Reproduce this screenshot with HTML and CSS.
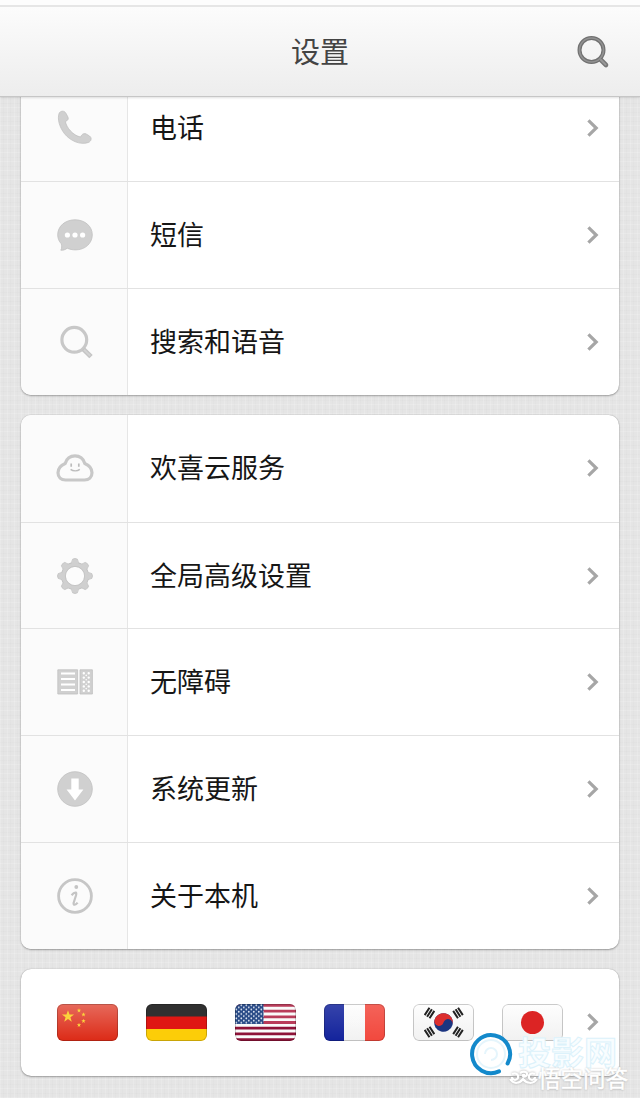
FILE: index.html
```html
<!DOCTYPE html>
<html lang="zh-CN">
<head>
    <meta charset="UTF-8">
    <meta name="viewport" content="width=device-width, initial-scale=1.0">
    <title>设置</title>
    <link rel="stylesheet" href="styles.css">
</head>
<body>
    <!-- shared shapes -->
    <svg class="defs" width="0" height="0">
        <defs>
            <linearGradient id="gloss" x1="0" y1="0" x2="0" y2="1">
                <stop offset="0" stop-color="#fff" stop-opacity="0.3"/>
                <stop offset="1" stop-color="#fff" stop-opacity="0"/>
            </linearGradient>
            <linearGradient id="paper" x1="0" y1="0" x2="0" y2="1">
                <stop offset="0" stop-color="#fefefe"/>
                <stop offset="1" stop-color="#f1f1f1"/>
            </linearGradient>
            <pattern id="stars" width="5" height="4.4" patternUnits="userSpaceOnUse">
                <circle cx="1.3" cy="1.2" r="0.9" fill="#dfe6f2"/>
                <circle cx="3.8" cy="3.4" r="0.9" fill="#dfe6f2"/>
            </pattern>
            <symbol id="chevron" viewBox="0 0 14 18">
                <path d="M2.4 1.4 L10.2 9 L2.4 16.6" fill="none" stroke="#a6a6a6" stroke-width="3.2"/>
            </symbol>
            <path id="star" d="M0 -6 L1.5 -1.8 L5.8 -1.8 L2.3 0.8 L3.6 5 L0 2.4 L-3.6 5 L-2.3 0.8 L-5.8 -1.8 L-1.5 -1.8 Z"/>
            <path id="bars" d="M-4.4 -2.9 H4.4 M-4.4 0 H4.4 M-4.4 2.9 H4.4"/>
            <path id="tooth" d="M12.5 7.4 Q16.4 6.4 16.6 2.2 Q19 0.8 21.4 2.2 Q21.6 6.4 25.5 7.4 Z"/>
        </defs>
    </svg>

    <header class="header">
        <h1>设置</h1>
        <svg class="header-search" width="34" height="34" viewBox="0 0 34 34">
            <path d="M25 25 L30 30" stroke="#777" stroke-width="4.6" stroke-linecap="round"/>
            <circle cx="15.5" cy="15" r="12" fill="none" stroke="#717171" stroke-width="4"/>
            <circle cx="15.5" cy="15" r="12" fill="none" stroke="#929292" stroke-width="1.6"/>
            <path d="M25 25 L29.6 29.6" stroke="#999" stroke-width="2" stroke-linecap="round"/>
        </svg>
    </header>

    <main class="content">
        <section class="card card-first">
            <div class="row">
                <div class="icon">
                    <svg width="38" height="38" viewBox="0 0 38 38">
                        <path class="solid" d="M3.3 3.8 C5.5 1.4 8.6 1.7 10 4.4 L12 8.2 C12.8 10.2 11.7 11.5 9.4 12.6 C10.4 18.6 17.2 26.6 24.5 28 C25.6 25.6 27.4 24.2 29.7 24.7 L33.5 27 C36.2 29.2 35.3 32 32.6 33.4 C24 36.5 14 31.5 8.6 24.8 C3.8 18.7 0.8 10 3.3 3.8 Z"/>
                    </svg>
                </div>
                <div class="label">电话</div>
                <svg class="arrow" width="14" height="18"><use href="#chevron"/></svg>
            </div>
            <div class="row">
                <div class="icon">
                    <svg width="38" height="38" viewBox="0 0 38 38">
                        <path class="solid" d="M19 3.8 C29 3.8 36.3 10.4 36.3 18.8 C36.3 27.5 29 33.9 19.5 33.9 C16.4 33.9 13.6 33.2 11.2 32.2 C9.4 33.7 7.2 34.4 4.8 34.2 C6 32 5.8 30 5.3 27.8 C3 25.4 1.7 22.4 1.7 18.8 C1.7 10.4 9 3.8 19 3.8 Z"/>
                        <circle class="hole" cx="11.4" cy="19" r="2.6"/>
                        <circle class="hole" cx="19" cy="19" r="2.6"/>
                        <circle class="hole" cx="26.6" cy="19" r="2.6"/>
                    </svg>
                </div>
                <div class="label">短信</div>
                <svg class="arrow" width="14" height="18"><use href="#chevron"/></svg>
            </div>
            <div class="row">
                <div class="icon">
                    <svg width="38" height="38" viewBox="0 0 38 38">
                        <circle class="line" cx="18.3" cy="16.8" r="12.4"/>
                        <path d="M27.3 26.1 L35 33.6" stroke="#c4c4c4" stroke-width="4.8"/>
                        <path d="M28 26.8 L34.2 32.8" stroke="#d3d3d3" stroke-width="2"/>
                    </svg>
                </div>
                <div class="label">搜索和语音</div>
                <svg class="arrow" width="14" height="18"><use href="#chevron"/></svg>
            </div>
        </section>

        <section class="card">
            <div class="row">
                <div class="icon">
                    <svg width="38" height="38" viewBox="0 0 38 38">
                        <path class="line" d="M9.5 31 H28.5 C32.9 31 36 28.2 36 23.8 C36 19.4 33.2 16.2 28.8 14.4 C27.2 9.4 23.8 6.9 19 6.9 C14.2 6.9 10.8 9.4 9.2 14.4 C4.8 16.2 2 19.4 2 23.8 C2 28.2 5.1 31 9.5 31 Z"/>
                        <path d="M15.2 14.6 V17.8 M22.8 14.6 V17.8" stroke="#bcbcbc" stroke-width="1.7"/>
                        <path d="M14.6 20.4 C17 22.4 21.4 22.4 23.8 20.4" fill="none" stroke="#bcbcbc" stroke-width="1.4"/>
                    </svg>
                </div>
                <div class="label">欢喜云服务</div>
                <svg class="arrow" width="14" height="18"><use href="#chevron"/></svg>
            </div>
            <div class="row">
                <div class="icon">
                    <svg width="38" height="38" viewBox="0 0 38 38">
                        <g class="solid">
                            <use href="#tooth"/>
                            <use href="#tooth" transform="rotate(45 19 19)"/>
                            <use href="#tooth" transform="rotate(90 19 19)"/>
                            <use href="#tooth" transform="rotate(135 19 19)"/>
                            <use href="#tooth" transform="rotate(180 19 19)"/>
                            <use href="#tooth" transform="rotate(225 19 19)"/>
                            <use href="#tooth" transform="rotate(270 19 19)"/>
                            <use href="#tooth" transform="rotate(315 19 19)"/>
                        </g>
                        <circle cx="19" cy="19" r="11.2" fill="#fcfcfc" stroke="#d0d0d0" stroke-width="3.8"/>
                        <circle cx="19" cy="19" r="9.6" fill="none" stroke="#c0c0c0" stroke-width="0.8"/>
                    </svg>
                </div>
                <div class="label">全局高级设置</div>
                <svg class="arrow" width="14" height="18"><use href="#chevron"/></svg>
            </div>
            <div class="row">
                <div class="icon">
                    <svg width="38" height="38" viewBox="0 0 38 38">
                        <path class="solid" d="M1.8 6.8 H21.6 V31 H1.8 Z M24 6.8 H36.4 V31 H24 Z"/>
                        <path d="M5 10.5 H19 M5 16 H19 M5 21.5 H19 M5 27 H19" stroke="#fff" stroke-width="2.2"/>
                        <path d="M27.8 10.2 V30 M32.7 10.2 V30" stroke="#fff" stroke-width="2.4" stroke-linecap="round" stroke-dasharray="0 4.4"/>
                        <path d="M30.2 12.4 V28" stroke="#fff" stroke-width="1.6" stroke-linecap="round" stroke-dasharray="0 4.4"/>
                    </svg>
                </div>
                <div class="label">无障碍</div>
                <svg class="arrow" width="14" height="18"><use href="#chevron"/></svg>
            </div>
            <div class="row">
                <div class="icon">
                    <svg width="38" height="38" viewBox="0 0 38 38">
                        <circle class="solid" cx="19" cy="19" r="17.3"/>
                        <path class="hole" d="M15.3 8.4 H22.7 V19.4 H27.4 L19 30.4 L10.6 19.4 H15.3 Z"/>
                    </svg>
                </div>
                <div class="label">系统更新</div>
                <svg class="arrow" width="14" height="18"><use href="#chevron"/></svg>
            </div>
            <div class="row">
                <div class="icon">
                    <svg width="38" height="38" viewBox="0 0 38 38">
                        <circle cx="19" cy="19" r="16.4" fill="none" stroke="#c6c6c6" stroke-width="2.8"/>
                        <circle cx="20.3" cy="10" r="1.9" fill="#c4c4c4"/>
                        <path d="M15.6 18.2 C17 16.4 18.4 15.4 19.8 15.6 C20.8 16 20.2 17.6 19.8 19 L17.6 26 C17.2 28.6 19.6 28.2 21.6 25.6" fill="none" stroke="#c4c4c4" stroke-width="2.2"/>
                    </svg>
                </div>
                <div class="label">关于本机</div>
                <svg class="arrow" width="14" height="18"><use href="#chevron"/></svg>
            </div>
        </section>

        <section class="card">
            <div class="row flags">
                <div class="flag">
                    <svg width="61" height="37" viewBox="0 0 61 37">
                        <rect width="61" height="37" fill="#dc2a16"/>
                        <rect width="61" height="37" fill="url(#gloss)"/>
                        <g fill="#fbd33c">
                            <use href="#star" transform="translate(11 12.5) scale(1.05)"/>
                            <use href="#star" transform="translate(22 6.5) scale(.38)"/>
                            <use href="#star" transform="translate(26.5 10.5) scale(.38)"/>
                            <use href="#star" transform="translate(26.5 17) scale(.38)"/>
                            <use href="#star" transform="translate(22 21) scale(.38)"/>
                        </g>
                    </svg>
                </div>
                <div class="flag">
                    <svg width="61" height="37" viewBox="0 0 61 37">
                        <rect width="61" height="13" fill="#303030"/>
                        <rect y="12.5" width="61" height="12.5" fill="#df1713"/>
                        <rect y="25" width="61" height="12" fill="#fccd08"/>
                    </svg>
                </div>
                <div class="flag">
                    <svg width="61" height="37" viewBox="0 0 61 37">
                        <rect width="61" height="37" fill="#fafafa"/>
                        <path d="M0 1.4 H61 M0 7.1 H61 M0 12.8 H61 M0 18.5 H61" stroke="#b93c5a" stroke-width="2.8"/>
                        <path d="M0 24.2 H61 M0 29.9 H61 M0 35.6 H61" stroke="#8e1238" stroke-width="2.8"/>
                        <rect width="28.5" height="20" fill="#284a86"/>
                        <rect width="28.5" height="20" fill="url(#stars)"/>
                    </svg>
                </div>
                <div class="flag">
                    <svg width="61" height="37" viewBox="0 0 61 37">
                        <rect width="20.5" height="37" fill="#13239c"/>
                        <rect x="20" width="21" height="37" fill="url(#paper)"/>
                        <rect x="41" width="20" height="37" fill="#f2483d"/>
                        <rect width="61" height="37" fill="url(#gloss)" opacity=".5"/>
                    </svg>
                </div>
                <div class="flag">
                    <svg width="61" height="37" viewBox="0 0 61 37">
                        <rect width="61" height="37" fill="url(#paper)"/>
                        <g transform="rotate(15 30.5 18.5)">
                            <circle cx="30.5" cy="18.5" r="9.3" fill="#1b3580"/>
                            <path d="M21.2 18.5 A9.3 9.3 0 0 1 39.8 18.5 A4.65 4.65 0 0 0 30.5 18.5 A4.65 4.65 0 0 1 21.2 18.5 Z" fill="#dc2e2e"/>
                        </g>
                        <g stroke="#222" stroke-width="2">
                            <use href="#bars" transform="translate(16.5 9) rotate(-57)"/>
                            <use href="#bars" transform="translate(45 9) rotate(57)"/>
                            <use href="#bars" transform="translate(16.5 28) rotate(57)"/>
                            <use href="#bars" transform="translate(45 28) rotate(-57)"/>
                        </g>
                    </svg>
                </div>
                <div class="flag">
                    <svg width="61" height="37" viewBox="0 0 61 37">
                        <rect width="61" height="37" fill="url(#paper)"/>
                        <circle cx="30.5" cy="18.5" r="11.5" fill="#dc2424"/>
                    </svg>
                </div>
                <svg class="arrow" width="14" height="18"><use href="#chevron"/></svg>
            </div>
        </section>
    </main>

    <div class="brand-mark">
        <svg width="44" height="44" viewBox="0 0 44 44">
            <circle cx="22" cy="22" r="14" fill="none" stroke="#e5f5fc" stroke-width="2"/>
            <path d="M16 22 A6 6 0 1 1 22 28" fill="none" stroke="#e5f5fc" stroke-width="2"/>
            <path d="M30 39.4 A19 19 0 1 1 38.6 31.5" fill="none" stroke="#1389cb" stroke-width="4" stroke-linecap="round"/>
        </svg>
        <span>投影网</span>
    </div>
    <div class="source-mark">
        <svg width="29" height="18" viewBox="0 0 29 18">
            <path d="M3 6 C7 4 10 7 9 10 C7 13 3 12 3 9 M11 5 C16 2 20 5 17 8 C14 10 12 6 16 7 M26 6 C22 4 19 7 20 10 C22 13 26 12 26 9 M1 11 C5 17 11 15 14 11 C17 15 24 17 28 11"/>
        </svg>
        <span>悟空问答</span>
    </div>
</body>
</html>
```

FILE: styles.css
```css
* {
    box-sizing: border-box;
}
body {
    margin: 0;
    height: 1098px;
    position: relative;
    overflow: hidden;
    font-family: "Noto Sans CJK SC", sans-serif;
    color: #161616;
    background-color: #e5e5e5;
    /* woven texture */
    background-image:
        repeating-linear-gradient(90deg, rgba(255, 255, 255, 0.16) 0 1px, transparent 1px 3px, rgba(0, 0, 0, 0.01) 3px 4px, transparent 4px 7px),
        repeating-linear-gradient(0deg, rgba(255, 255, 255, 0.16) 0 1px, transparent 1px 4px, rgba(0, 0, 0, 0.01) 4px 5px, transparent 5px 9px);
}
svg {
    display: block;
}
.defs {
    position: absolute;
}
.header {
    position: relative;
    z-index: 1;
    height: 97px;
    border-top: 5px solid #fdfdfd;
    border-bottom: 1px solid #c6c6c6;
    background: linear-gradient(#e6e6e6 0, #e6e6e6 2px, #fcfcfc 2px, #ededed 100%);
    box-shadow: 0 1px 2px rgba(0, 0, 0, 0.12);
    display: flex;
    align-items: center;
    justify-content: center;
}
h1 {
    margin: 0;
    padding-bottom: 2px;
    font-size: 29px;
    font-weight: 400;
    line-height: 40px;
    color: #444;
}
.header-search {
    position: absolute;
    right: 30px;
    top: 30px;
}
.content {
    display: flex;
    flex-direction: column;
    gap: 20.5px;
    padding: 0 21px;
}
.card {
    background: #fff;
    border-radius: 10px;
    overflow: hidden;
    box-shadow: 0 1px 2px rgba(0, 0, 0, 0.3), 0 0 1px rgba(0, 0, 0, 0.35);
}
/* scrolled partly under the header */
.card-first {
    margin-top: -22.5px;
}
.row {
    height: 106.7px;
    display: flex;
    align-items: center;
    padding-right: 19px;
}
.row + .row {
    border-top: 1px solid #e2e2e2;
}
.icon {
    width: 107px;
    height: 100%;
    padding-left: 1px;
    background: #fbfbfb;
    border-right: 1px solid #e6e6e6;
    display: flex;
    align-items: center;
    justify-content: center;
}
.icon svg {
    position: relative;
    left: 0.5px;
}
.label {
    flex: 1;
    padding: 0 0 2px 22px;
    font-size: 27px;
    line-height: 40px;
}
.arrow {
    flex: none;
    margin-left: auto;
}
.solid {
    fill: #d0d0d0;
    stroke: #c0c0c0;
    stroke-width: 0.8;
}
.line {
    fill: none;
    stroke: #c8c8c8;
    stroke-width: 3.2;
}
.hole {
    fill: #fff;
}
.flags {
    padding-left: 36px;
    gap: 28px;
}
.flag {
    position: relative;
    flex: none;
    width: 61px;
    height: 37px;
    border-radius: 6px;
    overflow: hidden;
}
.flag::after {
    content: "";
    position: absolute;
    inset: 0;
    border-radius: 6px;
    border: 1px solid rgba(0, 0, 0, 0.2);
}
.flags .arrow {
    margin-left: -5px;
}
.brand-mark {
    position: absolute;
    z-index: 2;
    left: 469px;
    top: 1032px;
    display: flex;
    align-items: center;
    gap: 5px;
    font-size: 33px;
    line-height: 33px;
    font-weight: 700;
    color: #f8fdff;
    -webkit-text-stroke: 1px #dcf2fb;
}
.brand-mark span {
    padding-bottom: 6px;
}
.source-mark {
    position: absolute;
    z-index: 3;
    left: 509px;
    top: 1066px;
    display: flex;
    align-items: center;
    font-size: 22.5px;
    line-height: 22px;
    color: #fff;
    -webkit-text-stroke: 0.5px #fff;
    text-shadow: 0 0 2px #b4b4b4, 0 1px 2px #c4c4c4;
}
.source-mark svg {
    fill: none;
    stroke: #fff;
    stroke-width: 2.2;
    filter: drop-shadow(0 0 1px #aaa);
}
```
